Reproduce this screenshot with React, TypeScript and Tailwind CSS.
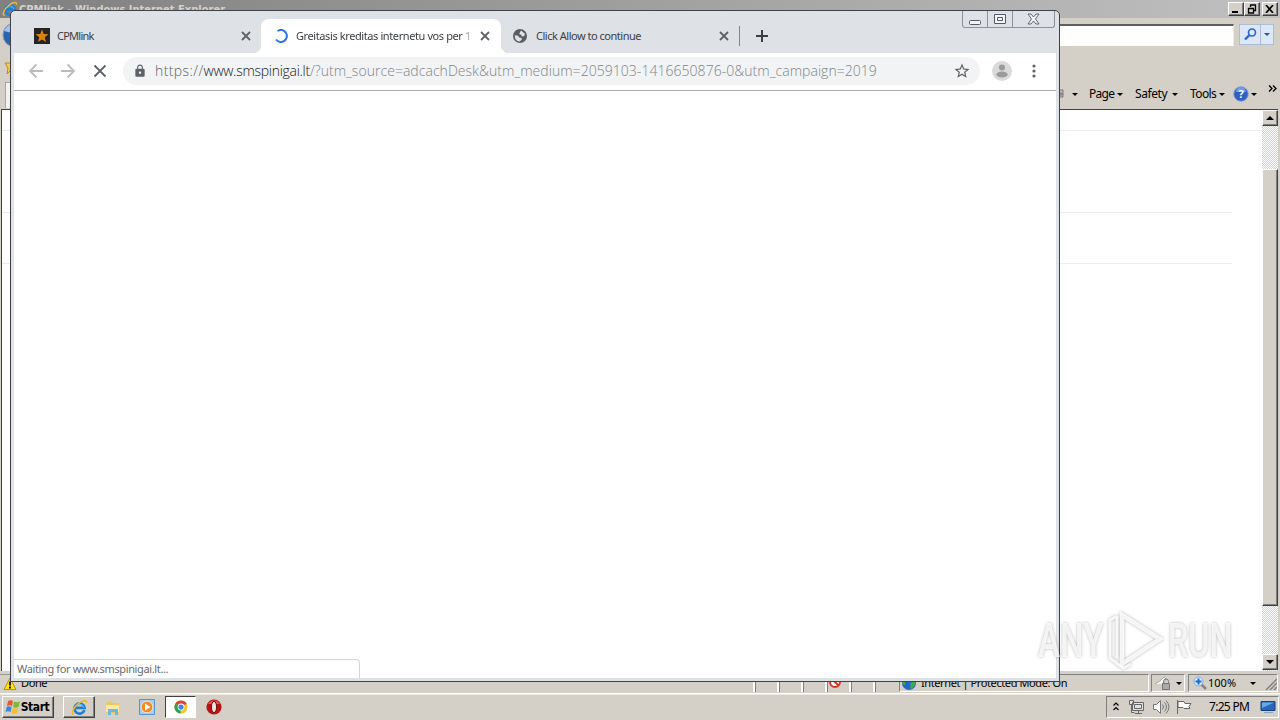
import React from 'react';
import { MdLock, MdStarBorder } from 'react-icons/md';

const Caret: React.FC<{ className?: string }> = ({ className = '' }) => (
  <svg width="6" height="3" viewBox="0 0 6 3" className={`shrink-0 ${className}`}>
    <path d="M0 0h6L3 3z" fill="currentColor" />
  </svg>
);

const IeLogo: React.FC<{ size: number }> = ({ size }) => (
  <svg width={size} height={size} viewBox="0 0 18 18" className="shrink-0" fill="none">
    <path d="M14.2 11.8A5.4 5.4 0 1 1 14.4 9.4H5" stroke="#1d7fd6" strokeWidth="2.9" />
    <path d="M13.4 9A4.6 4.6 0 0 0 5 7.6" stroke="#6cc8f5" strokeWidth="1" />
    <path d="M3 16.4C-.6 15.5 2.6 8.8 7.8 4.8c4.6-3.6 9.5-4.4 8.5-.6" stroke="#f0b92c" strokeWidth="1.7" />
  </svg>
);

const CloseX: React.FC = () => (
  <svg width="10" height="10" viewBox="0 0 10 10" className="shrink-0">
    <path d="M1 1l8 8M9 1L1 9" stroke="#5f6368" strokeWidth="1.8" />
  </svg>
);

const Raised: React.FC<{ className?: string; children?: React.ReactNode }> = ({ className = '', children }) => (
  <div
    className={`flex items-center justify-center bg-[#d4d0c8] border border-t-white border-l-white border-r-[#404040] border-b-[#404040] shadow-[inset_-1px_-1px_0_#808080] ${className}`}
  >
    {children}
  </div>
);

const statusCells = [755, 779, 803, 827, 851, 875];

const menus = [
  { label: 'Page', className: 'w-[46px] pr-[12px] tracking-[-0.700px]' },
  { label: 'Safety', className: 'w-[55px] pr-[12px] tracking-[-0.400px]' },
  { label: 'Tools', className: 'w-[43px] pr-[8px] tracking-[-0.600px]' }
];

const ExplorerWindow: React.FC = () => (
  <div className="flex flex-col h-[694px] bg-[#d4d0c8] text-[11px] text-black">
    {/* Title bar */}
    <div className="flex items-center h-[18px] pl-[2px] pr-[2px] bg-gradient-to-r from-[#808080] to-[#c0c0c0]">
      <IeLogo size={16} />
      <span className="ml-[1px] pt-[2px] text-[#d4d0c8] font-bold leading-[18px] tracking-[0.020px] whitespace-nowrap [font-family:'DejaVu_Sans_Condensed','DejaVu_Sans',sans-serif]">
        CPMlink - Windows Internet Explorer
      </span>
      <div className="flex ml-auto">
        <Raised className="w-4 h-[14px]">
          <svg width="12" height="10"><path d="M2 8h6" stroke="#000" strokeWidth="2" /></svg>
        </Raised>
        <Raised className="w-4 h-[14px]">
          <svg width="12" height="10" fill="none" stroke="#000">
            <path d="M4 1h6M4.500 1v2M9.500 1v5.500H8" strokeWidth="1.300" />
            <path d="M2 4.500h6M2.500 4v5h5V4" strokeWidth="1.300" />
          </svg>
        </Raised>
        <Raised className="w-4 h-[14px] ml-[2px]">
          <svg width="10" height="8"><path d="M1 0l7 8M8 0L1 8" stroke="#000" strokeWidth="1.700" /></svg>
        </Raised>
      </div>
    </div>

    {/* Address row */}
    <div className="flex h-[36px] pt-[6px] pr-[6px]">
      <svg width="30" height="30" className="-mt-[4px] shrink-0">
        <circle cx="15" cy="15" r="12" fill="#2d63b4" stroke="#8a96a8" />
        <path d="M4 11a12 12 0 0 1 8-7v9z" fill="#9fc3ef" />
      </svg>
      <div className="flex-1 ml-3 h-[22px] bg-white border border-t-2 border-t-[#606060] border-l-[#808080] border-r-[#ece9d8] border-b-white" />
      <div className="flex ml-[5px] h-[21px] w-[35px] border border-[#aebdd4] bg-[#dce8f8]">
        <div className="w-[21px] flex items-center justify-center border-r border-[#aebdd4]">
          <svg width="13" height="13" fill="none" stroke="#2c66c9">
            <circle cx="8" cy="4.500" r="3.500" strokeWidth="1.700" />
            <path d="M5.500 7L1 11.500" strokeWidth="2.400" />
          </svg>
        </div>
        <div className="flex-1 flex items-center justify-center text-[#2456a8]"><Caret /></div>
      </div>
    </div>

    {/* Favorites row */}
    <div className="h-[26px] flex items-center pl-[4px]">
      <svg width="16" height="16" className="mt-[4px]"><path d="M1 2h9l-2 5 3 6-5-3-3 3 1-6z" fill="#f7cc4b" stroke="#b98a1c" /></svg>
    </div>

    {/* Command bar */}
    <div className="flex items-center h-[29px]">
      <div className="ml-[5px] h-[26px] w-[100px] bg-[#f4f2ec] border border-[#aca899] border-b-0" />
      <div className="flex items-center ml-auto pr-[3px] pb-px h-full [font-family:'Noto_Sans',sans-serif]">
        <svg width="8" height="10" className="mr-[7px]"><path d="M1 1h5v7H1zM3 4h2v2H3z" fill="#c3c3c0" stroke="#777" /></svg>
        <Caret className="mr-[11px]" />
        {menus.map((m) => (
          <div key={m.label} className={`flex items-center text-[12px] ${m.className}`}>
            {m.label}
            <Caret className="ml-auto" />
          </div>
        ))}
        <svg width="16" height="16" viewBox="0 0 16 16">
          <circle cx="8" cy="8" r="7.300" fill="#2f5fc4" stroke="#8ea5d4" />
          <path d="M3 6a5 5 0 0 1 10 0z" fill="#6f9bea" />
          <text x="8" y="12" textAnchor="middle" fontSize="11" fontWeight="bold" fill="#fff">?</text>
        </svg>
        <Caret className="ml-[2px]" />
        <svg width="9" height="7" className="ml-[11px] -mt-[12px]" fill="none" stroke="#000" strokeWidth="1.300">
          <path d="M1 .5l3 3-3 3M5 .5l3 3-3 3" />
        </svg>
      </div>
    </div>

    {/* Page view */}
    <div className="flex h-[562px] ml-px mr-[2px] border-l border-t border-[#404040] bg-white">
      <div className="flex-1">
        <div className="h-[21px] border-b border-[#ececec]" />
        <div className="h-[82px] mr-[30px] border-b border-[#ececec]" />
        <div className="h-[51px] mr-[30px] border-b border-[#ececec]" />
      </div>
      <div className="w-4 flex flex-col bg-[repeating-conic-gradient(#d4d0c8_0_25%,#ffffff_0_50%)] bg-[length:2px_2px]">
        <Raised className="h-4">
          <svg width="8" height="4"><path d="M0 4h8L4 0z" /></svg>
        </Raised>
        <Raised className="h-[437px] mt-[43px]" />
        <Raised className="h-4 mt-auto mb-px">
          <svg width="8" height="4"><path d="M0 0h8L4 4z" /></svg>
        </Raised>
      </div>
    </div>

    {/* Status bar */}
    <div className="flex items-center h-[23px] pt-[3px] pb-px [font-family:'Noto_Sans',sans-serif] border-b border-white">
      <div className="flex items-center w-[755px] shrink-0 h-full border-t border-[#9a978f] pl-[3px]">
        <svg width="14" height="14" className="shrink-0">
          <path d="M7 1l6 11.500H1z" fill="#ffe01a" stroke="#b59400" />
          <path d="M7 4.500v4M7 9.500v2" stroke="#000" strokeWidth="1.700" />
        </svg>
        <span className="ml-[4px] tracking-[-0.400px]">Done</span>
      </div>
      {statusCells.map((x) => (
        <div key={x} className="w-6 shrink-0 h-full border-l border-[#808080] shadow-[-2px_0_0_#fff]">
          {x === 827 && (
            <svg width="20" height="16" fill="none">
              <path d="M9 5l7-4" stroke="#888" strokeWidth="3" />
              <circle cx="7" cy="8" r="5" fill="#fff" stroke="#cc3a2c" strokeWidth="2" />
              <path d="M3.500 4.500l7 7" stroke="#cc3a2c" strokeWidth="2" />
            </svg>
          )}
        </div>
      ))}
      <div className="flex items-center w-[250px] shrink-0 h-full border border-l-[#808080] border-t-[#808080] border-r-white border-b-white">
        <svg width="16" height="16" className="ml-px shrink-0">
          <circle cx="8" cy="8" r="7" fill="#2467c9" />
          <path d="M3 3c4-3 6 0 4 2s-3 1-3 4-3-2-3-2zM9 8l5-2c1 4-2 7-4 8-2-2 1-3-1-6z" fill="#3fae49" />
        </svg>
        <span className="ml-[4px] pt-px tracking-[-0.400px] whitespace-nowrap">Internet | Protected Mode: On</span>
      </div>
      <div className="flex items-center justify-between w-[34px] shrink-0 h-full ml-[2px] px-[2px] border border-l-[#808080] border-t-[#808080] border-r-white border-b-white">
        <svg width="19" height="16" className="shrink-0" fill="none">
          <path d="M1 9l5-3 4-4 2 2-3 5" fill="#f5f5f5" stroke="#aaa" />
          <path d="M9.500 8V6.500a2.500 2.500 0 0 1 5 0V8" stroke="#777" />
          <path d="M8.500 8.500h7v6h-7z" fill="#aaa" stroke="#777" />
        </svg>
        <Caret />
      </div>
      <div className="flex items-center flex-1 min-w-0 h-full ml-[3px] mr-[2px] pl-[4px] border border-l-[#808080] border-t-[#808080] border-r-white border-b-white">
        <svg width="15" height="15" fill="none" className="shrink-0">
          <path d="M8 8l5 5" stroke="#858585" strokeWidth="2.500" />
          <circle cx="5.500" cy="5.500" r="4.500" fill="#d9ecff" stroke="#7fa9dd" />
          <path d="M5.500 2.500v6M2.500 5.500h6" stroke="#1f6ad1" strokeWidth="2" />
        </svg>
        <span className="pt-px">100%</span>
        <Caret className="ml-[14px]" />
        <svg width="12" height="14" className="ml-auto shrink-0"><path d="M1 14L12 3M5 14l7-7M9 14l3-3" stroke="#808080" strokeWidth="1.500" /></svg>
      </div>
    </div>
  </div>
);

const WindowsFlag = () => (
  <svg width="16" height="16" viewBox="0 0 16 16" className="shrink-0">
    <path d="M3 2c2-1 3-1 5 0L7 7C5 6 4 6 2 7z" fill="#e8582b" />
    <path d="M9 2.500c2 1 4 1 6 0L13.500 8c-2 1-4 1-5.500 0z" fill="#7cb83a" />
    <path d="M1.600 8c2-1 3-1 5 0l-1 5c-2-1-3-1-5 0z" fill="#3f86d8" />
    <path d="M7.600 9c2 1 3.600 1 5.600 0l-1.400 5c-2 1-3.800 1-5.300 0z" fill="#f5bd2c" />
  </svg>
);

const Taskbar: React.FC = () => (
  <div className="flex items-start h-[26px] pt-px pl-[2px] bg-[#d4d0c8] border-t border-[#ece9e2] text-black">
    <Raised className="w-[52px] h-[22px] pr-[2px]">
      <WindowsFlag />
      <span className="font-bold text-[12px] tracking-[-0.450px] [font-family:'DejaVu_Sans_Condensed','DejaVu_Sans',sans-serif]">Start</span>
    </Raised>
    <Raised className="w-[32px] h-[22px] ml-[9px]"><IeLogo size={17} /></Raised>
    <svg width="16" height="16" viewBox="0 0 16 16" className="ml-[10px] mt-[4px]">
      <path d="M1 3l5-2 2 2h6v10H1z" fill="#edc862" />
      <path d="M1 5h13v7H1z" fill="#f9e9a6" />
      <path d="M3 15V9h10v6h-3v-3H6v3z" fill="#6bb6e3" />
    </svg>
    <svg width="16" height="16" viewBox="0 0 16 16" className="ml-[18px] mt-[3px]">
      <path d="M.5.5h15v15H.5z" fill="#a9cdec" stroke="#5594cf" />
      <circle cx="8" cy="8" r="5.800" fill="#f58a1f" stroke="#fff" strokeWidth=".6" />
      <path d="M6 4.500v7L11.500 8z" fill="#fff" />
    </svg>
    <div className="flex items-center justify-center w-[31px] h-[22px] ml-[10px] bg-white border border-t-[#404040] border-l-[#404040] border-r-white border-b-white">
      <svg width="14" height="14" viewBox="0 0 16 16">
        <circle cx="8" cy="8" r="7.500" fill="#f5c52c" />
        <path d="M8 8L1.500 4.200A7.500 7.500 0 0 1 14.500 4.200z" fill="#dc4437" />
        <path d="M8 8L1.500 4.200A7.500 7.500 0 0 0 7.500 15.500z" fill="#2ba24c" />
        <circle cx="8" cy="8" r="3.900" fill="#fff" />
        <circle cx="8" cy="8" r="3" fill="#4184f0" />
      </svg>
    </div>
    <svg width="16" height="16" viewBox="0 0 16 16" className="ml-[10px] mt-[3px]">
      <circle cx="8" cy="8" r="7.600" fill="#b81414" />
      <path d="M2 5a7 7 0 0 1 12 0z" fill="#dc5a50" />
      <ellipse cx="8" cy="8" rx="2.600" ry="5.600" fill="#e9e4df" stroke="#70100c" />
    </svg>
    <div className="flex items-center h-[22px] w-[173px] ml-auto mr-px pl-[6px] border border-l-[#808080] border-t-[#808080] border-r-white border-b-white text-[12px] [font-family:'Noto_Sans',sans-serif]">
      <svg width="6" height="9" fill="none" stroke="#000" strokeWidth="1.200" className="-mt-[2px]"><path d="M.5 3.500L3 1l2.500 2.500M.5 8L3 5.500 5.500 8" /></svg>
      <svg width="17" height="16" className="ml-[9px]" stroke="#666">
        <path d="M4.500 3.500h11v8h-11zM6.500 5.500h7v4h-7zM7 14.500h7M10.500 11.500v3M1.500 1.500h4v4h-4zM3.500 5.500v8h3" fill="#eeeeee99" />
      </svg>
      <svg width="18" height="16" className="ml-[7px]" fill="none" stroke="#777">
        <path d="M1.500 5.500h3l4-4v13l-4-4h-3z" fill="#fafafa" />
        <path d="M10.500 5.500q2 2.500 0 5M12.500 3.500q4 4.500 0 9M14 1.500q6 6.500 0 13" />
      </svg>
      <svg width="17" height="16" className="ml-[6px]" fill="#fafafa" stroke="#666">
        <path d="M1.500 1v14M2 2.500h6l1 2h6l-2 3 1 2H8l-1-1H2z" />
      </svg>
      <span className="ml-[16px] w-[51px] whitespace-nowrap tracking-[-0.700px]">7:25 PM</span>
      <svg width="16" height="14">
        <path d="M1 1.500h14v9H1z" fill="#2766bd" stroke="#174078" />
        <path d="M2 2.500h12L2 8z" fill="#6aa7e7" />
        <path d="M4 12.500h9" stroke="#8fa4ba" />
      </svg>
    </div>
  </div>
);

const ChromeWindow: React.FC = () => (
  <div className="absolute left-[10px] top-[10px] w-[1050px] h-[672px] flex flex-col rounded-t-[5px] border border-[#404048] bg-[#dee1e6] px-[3px] pb-[3px] overflow-hidden [font-family:'Noto_Sans',sans-serif]">
    {/* Tab strip */}
    <div className="flex h-[42px] shrink-0 text-[11px] text-[#3c4043]">
      <div className="flex items-center w-[247px] h-[34px] mt-[8px] pl-[20px]">
        <svg width="16" height="16" viewBox="0 0 16 16" className="shrink-0">
          <path d="M0 0h16v16H0z" fill="#252525" />
          <path d="M8 1.500l1.700 4.600 4.800.2-3.800 3 1.400 4.800L8 11.400l-4.100 2.700 1.400-4.800-3.800-3 4.800-.2z" fill="#de820f" />
        </svg>
        <span className="ml-[7px] tracking-[-0.750px]">CPMlink</span>
        <span className="ml-auto mr-[10px]"><CloseX /></span>
      </div>
      <div className="relative flex items-center w-[240px] h-[34px] mt-[8px] pl-[13px] rounded-t-lg bg-white">
        <div className="absolute -left-2 bottom-0 size-2 bg-[radial-gradient(circle_at_0_0,transparent_8px,#fff_8.500px)]" />
        <div className="absolute -right-2 bottom-0 size-2 bg-[radial-gradient(circle_at_100%_0,transparent_8px,#fff_8.500px)]" />
        <svg width="14" height="14" className="shrink-0" fill="none">
          <path d="M3.500 2A6 6 0 1 1 2 10.500" stroke="#2f74e0" strokeWidth="2" />
        </svg>
        <div className="w-[176px] ml-[8px] whitespace-nowrap tracking-[-0.400px] [mask-image:linear-gradient(to_right,#000_94%,transparent_101%)]">
          Greitasis kreditas internetu vos per 1
        </div>
        <span className="ml-auto mr-[11px]"><CloseX /></span>
      </div>
      <div className="flex items-center w-[239px] h-[34px] mt-[8px] pl-[12px]">
        <svg width="14" height="14" viewBox="0 0 14 14" className="shrink-0">
          <circle cx="7" cy="7" r="7" fill="#5a5e63" />
          <path d="M8 1.600l4 3.200-1 2.400-2.200.3-.6-1.700-1.800-.5.300-1.600zM1.800 6.200l3.400.6.900 1.600 2.500.5.200 1.700-2 1.800c-2.800.2-5.200-2.200-5-6.200z" fill="#dee1e6" />
        </svg>
        <span className="ml-[9px] whitespace-nowrap tracking-[-0.480px]">Click Allow to continue</span>
        <span className="ml-auto mr-[11px]"><CloseX /></span>
      </div>
      <div className="w-px h-[20px] -ml-px mt-[15px] bg-[#80868b]" />
      <svg width="12" height="12" className="ml-[16px] mt-[19px]"><path d="M6 0v12M0 6h12" stroke="#3c4043" strokeWidth="2" /></svg>
      <div className="flex w-[93px] h-[17px] ml-auto mr-px border border-t-0 border-[#8c919b] rounded-b-[3px]">
        <div className="w-[25px] flex justify-center items-center border-r border-[#8c919b]">
          <svg width="14" height="14" fill="#f4f4f6" stroke="#555a64"><rect x="1.500" y="8.500" width="11" height="4" rx="1" /></svg>
        </div>
        <div className="w-[25px] flex justify-center items-center border-r border-[#8c919b]">
          <svg width="12" height="12" fill="#f4f4f6" stroke="#555a64"><path d="M.5 1.500h11v9H.5zM3.500 4.500h5v3h-5z" /></svg>
        </div>
        <div className="flex-1 flex justify-center items-center">
          <svg width="13" height="12" fill="#f4f4f6" stroke="#555a64" strokeWidth=".9">
            <path d="M1 1h3l2.500 3L9 1h3L8.500 6l3.500 5H9L6.500 8 4 11H1l3.500-5z" />
          </svg>
        </div>
      </div>
    </div>

    {/* Toolbar */}
    <div className="flex items-center h-[38px] shrink-0 pl-[14px] pb-px bg-white border-b border-[#a9a9a9]">
      <svg width="16" height="16" className="shrink-0" fill="none" stroke="#b9bbbe" strokeWidth="1.800"><path d="M15 8H2.500M8.500 1.500L2 8l6.500 6.500" /></svg>
      <svg width="16" height="16" className="shrink-0 ml-[16px]" fill="none" stroke="#b9bbbe" strokeWidth="1.800"><path d="M1 8h12.500M7.500 1.500L14 8l-6.500 6.500" /></svg>
      <svg width="14" height="14" className="shrink-0 ml-[17px]" stroke="#5f6368" strokeWidth="1.900"><path d="M1.500 1.500l11 11M12.500 1.500l-11 11" /></svg>
      <div className="flex items-center w-[857px] h-[28px] ml-[16px] pl-[10px] pr-[9px] rounded-full bg-[#f1f3f4] text-[14px] text-[#80868b] whitespace-nowrap">
        <MdLock className="size-[14px] text-[#5f6368] shrink-0" />
        <div className="ml-[8px] pb-px [font-family:'Open_Sans','Noto_Sans',sans-serif] font-light tracking-[0.040px]">
          <span className="text-[#5f6368] tracking-[0.400px]">https://</span>
          <span className="text-[#202124] tracking-[-0.280px]">www.smspinigai.lt</span>
          /?utm_source=adcachDesk&amp;utm_medium=2059103-1416650876-0&amp;utm_campaign=2019
        </div>
        <MdStarBorder className="size-[18px] ml-auto text-[#5f6368] shrink-0" />
      </div>
      <svg width="20" height="20" className="ml-[12px] shrink-0">
        <circle cx="10" cy="10" r="10" fill="#dadada" />
        <circle cx="10" cy="6.500" r="3" fill="#9b9b9b" />
        <ellipse cx="10" cy="13.500" rx="5.700" ry="3" fill="#9b9b9b" />
      </svg>
      <svg width="4" height="14" className="ml-[20px]" fill="#5f6368">
        <circle cx="2" cy="2" r="1.600" /><circle cx="2" cy="7" r="1.600" /><circle cx="2" cy="12" r="1.600" />
      </svg>
    </div>

    {/* Page with the loading bubble */}
    <div className="flex-1 flex items-end bg-white">
      <div className="w-[346px] h-[19px] pl-[3px] leading-[18px] tracking-[-0.370px] border-t border-r border-[#d5d5d8] rounded-tr-[4px] text-[11px] text-[#6b6b6b]">
        Waiting for www.smspinigai.lt...
      </div>
    </div>
  </div>
);

const Watermark: React.FC = () => (
  <div className="absolute left-[1038px] top-[608px] w-[196px] h-[64px] flex items-center justify-between text-[49px] font-medium leading-none text-white/80 [font-family:Roboto,sans-serif] [filter:drop-shadow(0_0_1.500px_rgba(0,0,0,0.35))]">
    <span className="w-[64px] origin-left scale-x-[0.680]">ANY</span>
    <svg width="58" height="62" viewBox="0 0 58 62" fill="none" stroke="#fff" strokeOpacity=".85" strokeWidth="4.500" className="shrink-0">
      <path d="M16 6l38 24-38 25z" />
      <path d="M11 7L4 11v38l13 10 8-4M11 7v42" strokeWidth="3" />
    </svg>
    <span className="w-[66px] origin-left scale-x-[0.660]">RUN</span>
  </div>
);

const App: React.FC = () => (
  <div className="relative w-[1280px] h-[720px] overflow-hidden bg-[#d4d0c8]">
    <ExplorerWindow />
    <Taskbar />
    <ChromeWindow />
    <Watermark />
  </div>
);

export default App;
